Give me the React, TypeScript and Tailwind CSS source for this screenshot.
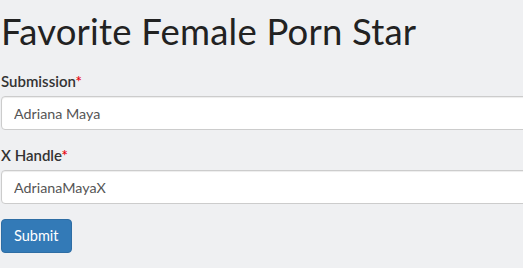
export default function App() {
  return (
    <div className="min-h-screen overflow-hidden bg-[#eff0f2] pl-px font-['Lato','Noto_Sans',sans-serif] text-[#333]">
      <div className="w-[600px]">
        <h1 className="mt-[11px] mb-[20px] text-[36.5px] font-normal leading-[1.1] tracking-[0.2px] text-[#222]">
          Favorite Female Porn Star
        </h1>

        <form>
          {/* Submission */}
          <div className="mb-[15px]">
            <label className="mb-[5px] block text-[15px] font-semibold leading-5">
              Submission<span className="text-red-600">*</span>
            </label>
            <input
              type="text"
              defaultValue="Adriana Maya"
              className="block h-[34px] w-full rounded border border-[#ccc] bg-white px-3 py-1.5 text-[14.3px] text-[#555] shadow-[inset_0_1px_1px_rgba(0,0,0,0.075)]"
            />
          </div>

          {/* X Handle */}
          <div className="mb-[15px]">
            <label className="mb-[5px] block text-[15px] font-semibold leading-5">
              X Handle<span className="text-red-600">*</span>
            </label>
            <input
              type="text"
              defaultValue="AdrianaMayaX"
              className="block h-[34px] w-full rounded border border-[#ccc] bg-white px-3 py-1.5 text-[14.3px] text-[#555] shadow-[inset_0_1px_1px_rgba(0,0,0,0.075)]"
            />
          </div>

          <button
            type="button"
            className="h-[34px] rounded border border-[#2e6da4] bg-[#337ab7] px-3 text-[14.5px] text-white"
          >
            Submit
          </button>
        </form>
      </div>
    </div>
  );
}
